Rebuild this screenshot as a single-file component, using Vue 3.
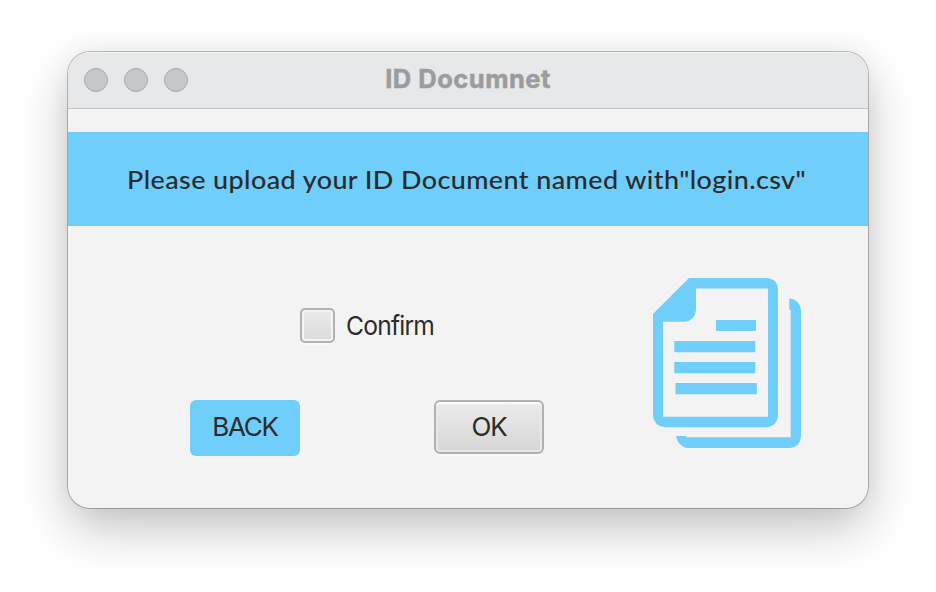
<script setup>
import { ref } from 'vue'

const confirmed = ref(false)
</script>

<template>
  <main class="desktop">
    <section class="window">
      <header class="titlebar">
        <div class="lights"><i></i><i></i><i></i></div>
        <h1 class="title"><span>ID Documnet</span></h1>
      </header>
      <div class="banner"><span class="message">Please upload your ID Document named with"login.csv"</span></div>
      <div class="content">
        <div class="form">
          <label class="confirm">
            <input v-model="confirmed" class="box" type="checkbox" />
            <span class="confirm-text">Confirm</span>
          </label>
          <div class="actions">
            <button class="back" type="button"><span>BACK</span></button>
            <button class="ok" type="button"><span>OK</span></button>
          </div>
        </div>
        <svg class="documents" viewBox="0 0 148 170" width="148" height="170">
          <path
            fill-rule="evenodd"
            d="M36 0H114Q125 1 125 12V138Q124 148 114 149.300H12Q1 148 0 138V36ZM43 10.500V32Q42 42.500 32 43.700H10V138.700H115V10.500Z"
          />
          <path d="M136.300 20.300Q147 22 148 32V159Q147 169 137 170H34Q25 168 23 158H33V159.300H137.700V32H136.300Z" />
          <path d="M63 42h40v11H63zM21.300 63h81v11.300h-81zM21.300 84h81v11.300h-81zM22.500 105h81.300v11.300H22.500z" />
        </svg>
      </div>
    </section>
  </main>
</template>

<style>
body {
  background: #fff;
}
</style>

<style scoped>
.desktop {
  box-sizing: border-box;
  width: 936px;
  height: 592px;
  padding: 52px 68px;
  overflow: hidden;
  background: #fff;
  font-family: Inter, "Liberation Sans", sans-serif;
  color: #2b2b2b;
}
.window {
  width: 800px;
  height: 456px;
  overflow: hidden;
  border-radius: 22px;
  background: #f3f3f3;
  box-shadow:
    0 0 0 1px rgba(0, 0, 0, 0.24),
    0 20px 50px rgba(0, 0, 0, 0.24),
    0 0 24px rgba(0, 0, 0, 0.05);
}
.titlebar {
  box-sizing: border-box;
  display: grid;
  grid-template-columns: 1fr auto 1fr;
  align-items: center;
  height: 57px;
  padding: 0 16px;
  border-bottom: 1px solid #c3c4c5;
  background: #e6e8e9;
  box-shadow: inset 0 1px 0 #f4f5f5;
}
.lights {
  display: flex;
  gap: 16px;
}
.lights i {
  box-sizing: border-box;
  width: 24px;
  height: 24px;
  border: 1px solid #a5a6a7;
  border-radius: 50%;
  background: #c7c8ca;
}
.title {
  margin: 0;
  padding-bottom: 2px;
  font-size: 25.5px;
  font-weight: 700;
  line-height: 30px;
  letter-spacing: 0.5px;
  color: #9b9c9d;
  -webkit-text-stroke: 0.5px #9b9c9d;
}
.banner {
  display: flex;
  align-items: center;
  justify-content: center;
  height: 94px;
  margin-top: 23px;
  background: #70cefb;
}
.message {
  padding: 1px 2px 0 0;
  font-family: Lato, "Liberation Sans", sans-serif;
  font-size: 24.5px;
  font-weight: 500;
  line-height: 32px;
  letter-spacing: 0.37px;
  white-space: nowrap;
  transform: scaleX(1.1);
}
.content {
  display: flex;
  padding: 52px 67px 0 122px;
}
.form {
  width: 354px;
  padding-top: 30px;
}
.confirm {
  display: flex;
  align-items: center;
  gap: 11px;
  width: max-content;
  margin-left: 110px;
  font-size: 26px;
  line-height: 35px;
}
.box {
  appearance: none;
  box-sizing: border-box;
  width: 35px;
  height: 35px;
  margin: 0;
  border: 2px solid #b1b1b1;
  border-radius: 5px;
  background: linear-gradient(#ebebeb, #dadada);
  box-shadow:
    inset 0 0 0 2px #f4f4f4,
    0 2px 0 #f9f9f9;
}
.confirm-text {
  padding-top: 1px;
  line-height: 34px;
  letter-spacing: -0.8px;
  transform: scaleX(0.945);
  transform-origin: left;
}
.actions {
  display: flex;
  align-items: flex-start;
  justify-content: space-between;
  margin-top: 57px;
}
button {
  box-sizing: border-box;
  width: 110px;
  padding: 0;
  font: 26px/30px Inter, "Liberation Sans", sans-serif;
  letter-spacing: -1.2px;
  color: #2b2b2b;
}
.back {
  height: 56px;
  padding-bottom: 2px;
  border: 0;
  border-radius: 6px;
  background: #70cefb;
}
.ok {
  height: 54px;
  border: 2px solid #b1b1b1;
  border-radius: 6px;
  background: linear-gradient(#ececec, #d6d6d6);
  box-shadow:
    inset 0 2px 0 #fcfcfc,
    inset 0 0 0 2px #e8e8e8,
    0 2px 0 #fbfbfb;
}
.documents {
  margin-left: 109px;
  fill: #70cefb;
}
</style>
